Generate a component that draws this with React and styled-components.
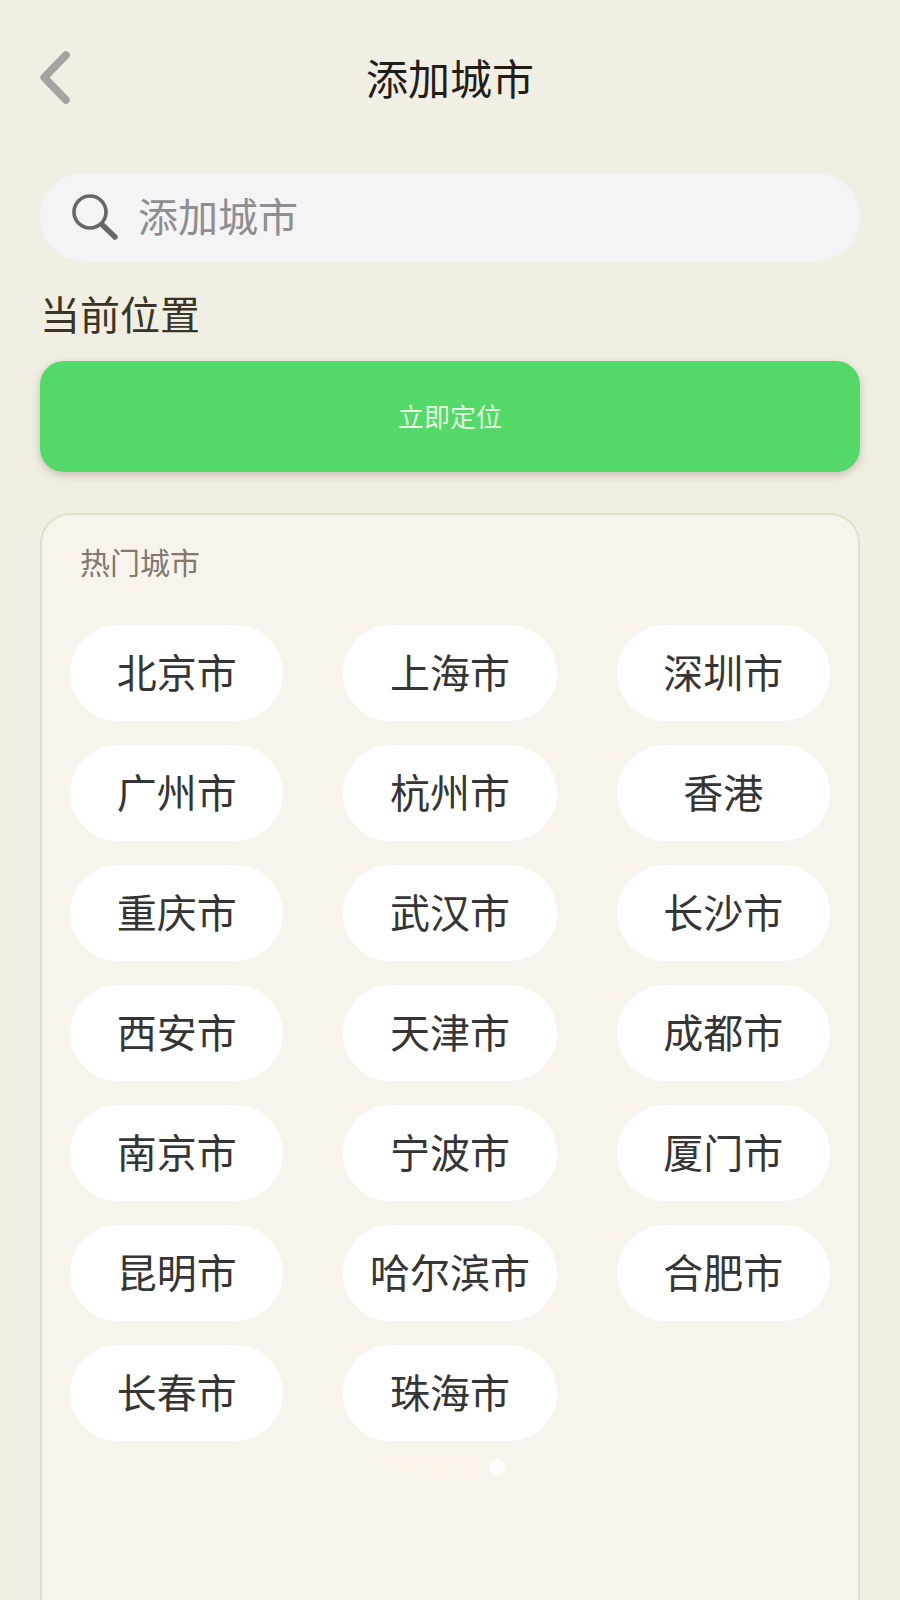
import React, { useState } from "react";
import styled, { createGlobalStyle } from "styled-components";

const GlobalStyle = createGlobalStyle`
  * {
    box-sizing: border-box;
  }
  body {
    margin: 0;
    background: #f1eee3;
    font-family: "Noto Sans CJK SC", "Noto Sans", sans-serif;
  }
  button,
  input {
    font-family: inherit;
  }
`;

const Page = styled.div`
  display: flex;
  flex-direction: column;
  min-height: 100vh;
  padding: 0 40px;
`;

const Header = styled.header`
  display: grid;
  grid-template-columns: 60px 1fr 60px;
  align-items: center;
  height: 154px;
`;

const BackButton = styled.button`
  display: flex;
  padding: 0;
  border: none;
  background: none;
  cursor: pointer;
`;

const Title = styled.h1`
  margin: 0;
  font-size: 42px;
  font-weight: 400;
  line-height: 60px;
  text-align: center;
  color: #231d18;
`;

const SearchBar = styled.label`
  display: flex;
  align-items: center;
  gap: 20px;
  height: 88px;
  margin-top: 19px;
  padding: 0 32px;
  border-radius: 44px;
  background: #f4f3f5;
`;

const SearchInput = styled.input`
  flex: 1;
  min-width: 0;
  padding: 0 0 4px;
  border: none;
  outline: none;
  background: transparent;
  font-size: 40px;
  line-height: 60px;
  color: #333333;

  &::placeholder {
    color: #8f8d90;
    opacity: 1;
  }
`;

const SectionTitle = styled.h2`
  margin: 22px 0 18px;
  font-size: 40px;
  font-weight: 400;
  line-height: 60px;
  color: #3a3527;
`;

const LocateButton = styled.button`
  height: 111px;
  padding: 0 0 2px;
  border: none;
  border-radius: 24px;
  background: #53d967;
  box-shadow: 0 3px 8px rgba(90, 70, 50, 0.28);
  font-size: 26px;
  color: #e6fde2;
  cursor: pointer;
`;

const Card = styled.section`
  flex: 1;
  margin-top: 41px;
  padding: 25px 28px;
  border: 2px solid #e4e0c6;
  border-bottom: none;
  border-radius: 30px 30px 0 0;
  background: #f8f4ec;
`;

const CardTitle = styled.h3`
  margin: 0 0 43px;
  padding-left: 10px;
  font-size: 30px;
  font-weight: 400;
  line-height: 42px;
  color: #83776e;
`;

const CityGrid = styled.div`
  display: grid;
  grid-template-columns: repeat(3, 1fr);
  gap: 24px 60px;
`;

const CityButton = styled.button`
  height: 96px;
  padding: 0 0 4px;
  border: none;
  border-radius: 48px;
  background: #ffffff;
  font-size: 40px;
  color: #353535;
  white-space: nowrap;
  cursor: pointer;
`;

const Dots = styled.div`
  display: flex;
  justify-content: center;
  gap: 15px;
  margin-top: 18px;
`;

const Dot = styled.span`
  width: 16px;
  height: 16px;
  border-radius: 50%;
  background: ${({ $active }) => ($active ? "#fffefc" : "#fcf4eb")};
`;

const cities = [
  "北京市",
  "上海市",
  "深圳市",
  "广州市",
  "杭州市",
  "香港",
  "重庆市",
  "武汉市",
  "长沙市",
  "西安市",
  "天津市",
  "成都市",
  "南京市",
  "宁波市",
  "厦门市",
  "昆明市",
  "哈尔滨市",
  "合肥市",
  "长春市",
  "珠海市",
];

const BackIcon = () => (
  <svg width="32" height="54" viewBox="0 0 32 54" fill="none" aria-hidden="true">
    <path
      d="M26 5 4.2 27.5 26 50"
      stroke="#a5a3a0"
      strokeWidth="7.6"
      strokeLinecap="round"
      strokeLinejoin="round"
    />
  </svg>
);

const SearchIcon = () => (
  <svg width="46" height="46" viewBox="0 0 46 46" fill="none" aria-hidden="true">
    <circle cx="18" cy="18" r="16" stroke="#686667" strokeWidth="3.6" />
    <path d="m29 29.5 3 3" stroke="#686667" strokeWidth="3.6" />
    <path d="m31 31.5 12 11.5" stroke="#686667" strokeWidth="5.4" strokeLinecap="round" />
  </svg>
);

const App = () => {
  const [keyword, setKeyword] = useState("");

  return (
    <>
      <GlobalStyle />
      <Page lang="zh-CN">
        <Header>
          <BackButton type="button" aria-label="返回">
            <BackIcon />
          </BackButton>
          <Title>添加城市</Title>
        </Header>

        <SearchBar>
          <SearchIcon />
          <SearchInput
            type="text"
            aria-label="添加城市"
            placeholder="添加城市"
            value={keyword}
            onChange={(e) => setKeyword(e.target.value)}
          />
        </SearchBar>

        <SectionTitle>当前位置</SectionTitle>
        <LocateButton type="button">立即定位</LocateButton>

        <Card>
          <CardTitle>热门城市</CardTitle>
          <CityGrid>
            {cities.map((city) => (
              <CityButton key={city} type="button">
                {city}
              </CityButton>
            ))}
          </CityGrid>
          {/* Page indicator, the last page is active */}
          <Dots>
            {[0, 1, 2, 3].map((page) => (
              <Dot key={page} $active={page === 3} />
            ))}
          </Dots>
        </Card>
      </Page>
    </>
  );
};

export default App;
